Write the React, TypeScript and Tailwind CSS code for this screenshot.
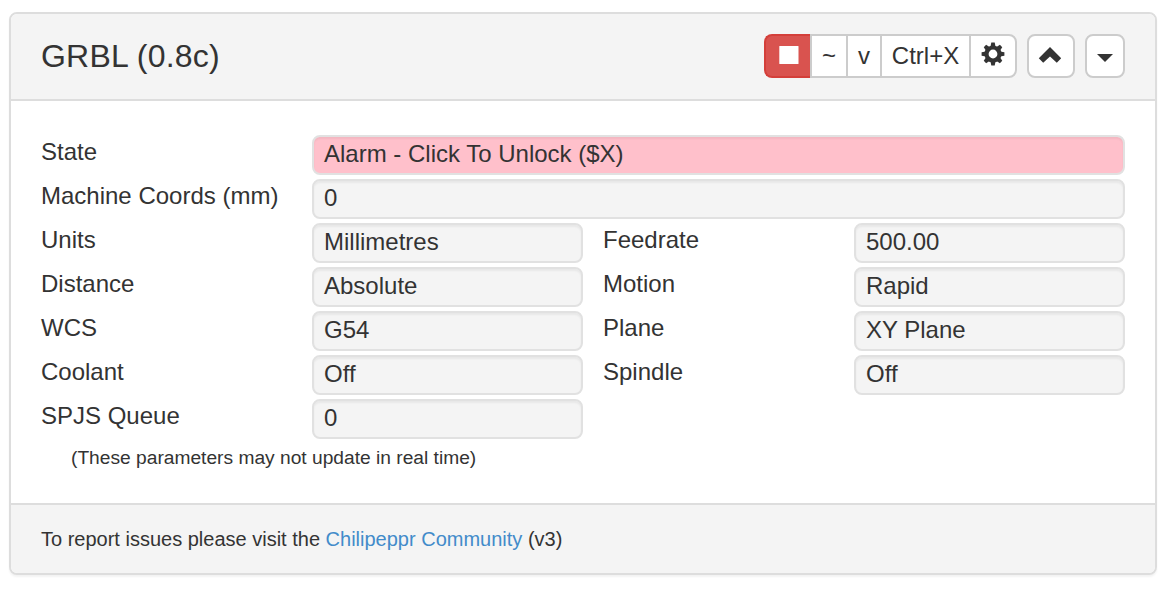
import React from "react";

function Field({ value, className = "" }: { value: string; className?: string }) {
  return (
    <div
      className={`h-10 rounded-lg border-2 border-[#e1e1e1] pl-[10px] text-2xl leading-[33px] shadow-[inset_0_2px_2px_rgba(0,0,0,0.05)] ${className}`}
    >
      {value}
    </div>
  );
}

function Label({ children }: { children: string }) {
  return <div className="text-2xl leading-[34px] whitespace-nowrap">{children}</div>;
}

function GearIcon() {
  return (
    <svg width="24" height="24" viewBox="-12 -12 24 24" fill="#333">
      {[0, 45, 90, 135, 180, 225, 270, 315].map((angle) => (
        <path key={angle} d="M-2.6 -7 L-1.7 -11.4 H1.7 L2.6 -7 Z" transform={`rotate(${angle})`} />
      ))}
      <circle r="6.5" fill="none" stroke="#333" strokeWidth="4.2" />
    </svg>
  );
}

const rows = [
  ["Units", "Millimetres", "Feedrate", "500.00"],
  ["Distance", "Absolute", "Motion", "Rapid"],
  ["WCS", "G54", "Plane", "XY Plane"],
  ["Coolant", "Off", "Spindle", "Off"],
];

const button = "flex h-11 items-center justify-center border-2 border-[#ccc] bg-white text-2xl";

export default function App() {
  return (
    <div className="h-[589px] bg-white pt-3 pl-[9px] font-['Liberation_Sans',Arial,sans-serif] text-[#333]">
      <section className="flex h-[563px] w-[1148px] flex-col overflow-hidden rounded-lg border-2 border-[#ddd] bg-white shadow-[0_2px_2px_rgba(0,0,0,0.05)]">
        <header className="flex h-[87px] shrink-0 items-start justify-between border-b-2 border-[#ddd] bg-[#f4f4f4] px-[30px] pt-5">
          <h1 className="text-[32px] leading-11 tracking-[0.2px]">GRBL (0.8c)</h1>
          <div className="flex gap-[10px]">
            <div className="flex">
              <button className="flex h-11 w-[46px] items-center justify-center rounded-l-lg border-2 border-r-0 border-[#d43f3a] bg-[#d9534f]">
                <svg width="20" height="18" viewBox="0 0 20 18" className="ml-[2px] -mt-[2px]">
                  <rect x="0.3" width="19.2" height="18" rx="0.6" fill="white" />
                </svg>
              </button>
              <button className={`${button} w-[38px]`}>~</button>
              <button className={`${button} -ml-[2px] w-9`}>v</button>
              <button className={`${button} -ml-[2px] w-[91px]`}>Ctrl+X</button>
              <button className={`${button} -ml-[2px] w-12 rounded-r-lg pb-1`}>
                <GearIcon />
              </button>
            </div>
            <button className={`${button} w-12 rounded-lg`}>
              <svg width="24" height="16" viewBox="0 0 24 16" className="mr-[2px] -mt-[3px]">
                <path d="M12 0 L23.2 11.2 L18.8 15.7 L12 9.4 L5.2 15.7 L0.8 11.2 Z" fill="#333" />
              </svg>
            </button>
            <button className={`${button} w-10 rounded-lg`}>
              <svg width="16" height="8" viewBox="0 0 16 8" className="mt-1">
                <path d="M0 0 H16 L8 8 Z" fill="#333" />
              </svg>
            </button>
          </div>
        </header>
        <main className="flex-1 px-[30px] pt-[34px]">
          <div className="grid auto-rows-[40px] grid-cols-[271px_271px_271px_271px] gap-y-1">
            <Label>State</Label>
            <Field value="Alarm - Click To Unlock ($X)" className="col-span-3 bg-[#ffc0cb]" />
            <Label>Machine Coords (mm)</Label>
            <Field value="0" className="col-span-3 bg-[#f4f4f4]" />
            {rows.map(([label, value, label2, value2]) => (
              <React.Fragment key={label}>
                <Label>{label}</Label>
                <Field value={value} className="bg-[#f4f4f4]" />
                <div className="pl-5">
                  <Label>{label2}</Label>
                </div>
                <Field value={value2} className="bg-[#f4f4f4]" />
              </React.Fragment>
            ))}
            <Label>SPJS Queue</Label>
            <Field value="0" className="bg-[#f4f4f4]" />
          </div>
          <p className="mt-1 pl-[30px] text-[19.2px] leading-[30px]">
            (These parameters may not update in real time)
          </p>
        </main>
        <footer className="h-[70px] shrink-0 border-t-2 border-[#ddd] bg-[#f4f4f4] px-[30px] text-xl leading-[68px]">
          To report issues please visit the <a className="text-[#428bca]">Chilipeppr Community</a> (v3)
        </footer>
      </section>
    </div>
  );
}
